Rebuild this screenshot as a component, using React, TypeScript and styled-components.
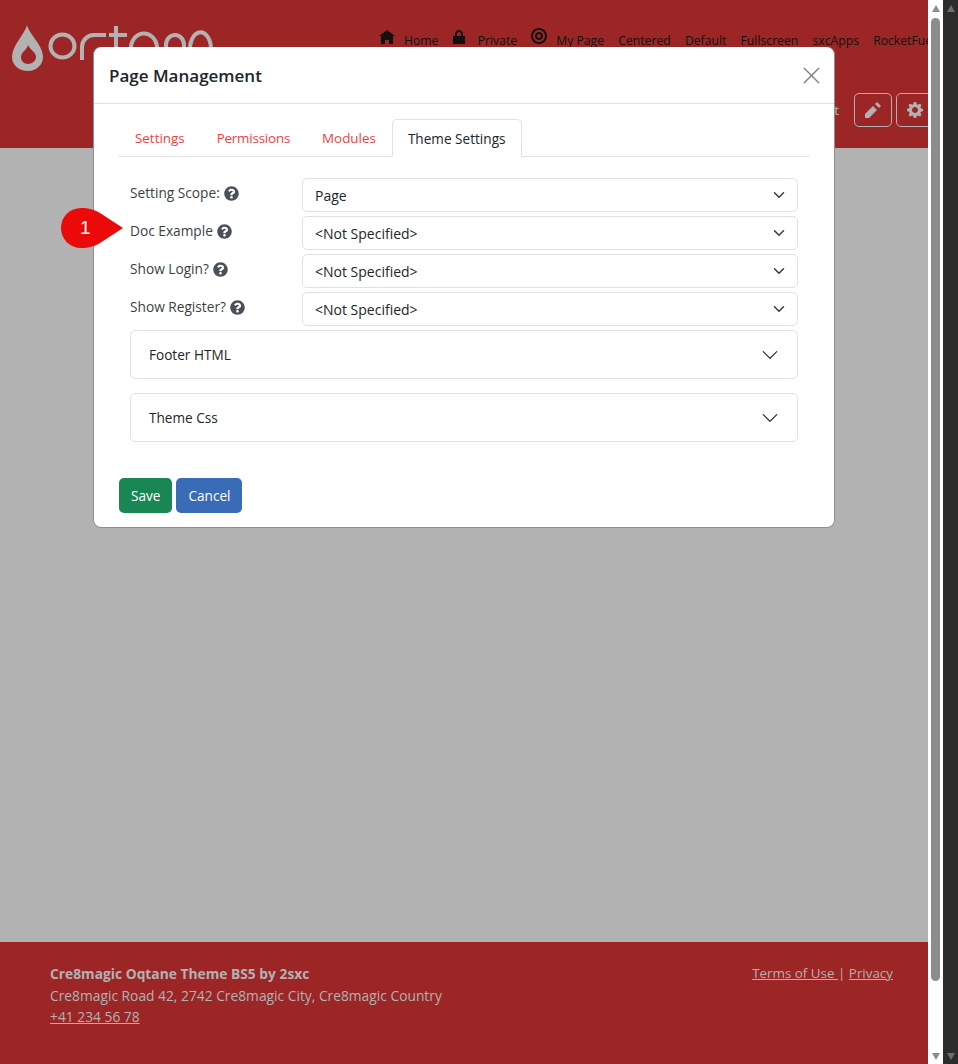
import React from 'react';
import styled, { createGlobalStyle } from 'styled-components';
import { X } from 'lucide-react';
import { FaQuestionCircle } from 'react-icons/fa';

const GlobalStyle = createGlobalStyle`
  html, body {
    margin: 0;
    padding: 0;
    height: 100%;
    overflow: hidden;
  }
  body {
    font-family: "Open Sans", "Noto Sans", sans-serif;
    font-size: 14px;
    color: #212529;
  }
`;

const HOME = 'M4 0l-4 3h1v4h2v-2h2v2h2v-4.03l1 .03-4-3z';
const LOCK = 'M3 0c-1.1 0-2 .9-2 2v1h-1v4h6v-4h-1v-1c0-1.1-.9-2-2-2zm0 1c.55 0 1 .45 1 1v1h-2v-1c0-.55.45-1 1-1z';
const TARGET =
  'M4 0c-2.2 0-4 1.8-4 4s1.8 4 4 4 4-1.8 4-4-1.8-4-4-4zm0 1c1.66 0 3 1.34 3 3s-1.34 3-3 3-3-1.34-3-3 1.34-3 3-3zm0 1c-1.1 0-2 .9-2 2s.9 2 2 2 2-.9 2-2-.9-2-2-2zm0 1c.55 0 1 .45 1 1s-.45 1-1 1-1-.45-1-1 .45-1 1-1z';
const PENCIL = 'M6 0l-1 1 2 2 1-1-2-2zm-2 2l-4 4v2h2l4-4-2-2z';
const COG =
  'M3.5 0l-.5 1.19c-.1.03-.19.08-.28.13l-1.19-.5-.72.72.5 1.19c-.05.1-.09.18-.13.28l-1.19.5v1l1.19.5c.04.1.08.18.13.28l-.5 1.19.72.72 1.19-.5c.09.04.18.09.28.13l.5 1.19h1l.5-1.19c.09-.04.19-.08.28-.13l1.19.5.72-.72-.5-1.19c.04-.09.09-.19.13-.28l1.19-.5v-1l-1.19-.5c-.03-.09-.08-.19-.13-.28l.5-1.19-.72-.72-1.19.5c-.09-.04-.19-.09-.28-.13l-.5-1.19h-1zm.5 2.5c.83 0 1.5.67 1.5 1.5s-.67 1.5-1.5 1.5-1.5-.67-1.5-1.5.67-1.5 1.5-1.5z';
const ACCORDION_CHEVRON =
  'M1.646 4.646a.5.5 0 0 1 .708 0L8 10.293l5.646-5.647a.5.5 0 0 1 .708.708l-6 6a.5.5 0 0 1-.708 0l-6-6a.5.5 0 0 1 0-.708z';

const menu = [
  { label: 'Home', icon: HOME, box: 8, top: 5 },
  { label: 'Private', icon: LOCK, box: 6, top: 5 },
  { label: 'My Page', icon: TARGET, box: 8, top: 3 },
  { label: 'Centered' },
  { label: 'Default' },
  { label: 'Fullscreen' },
  { label: 'sxcApps' },
  { label: 'RocketFuel' },
];

const fields = [
  { label: 'Setting Scope:', value: 'Page' },
  { label: 'Doc Example', value: '<Not Specified>' },
  { label: 'Show Login?', value: '<Not Specified>' },
  { label: 'Show Register?', value: '<Not Specified>' },
];

function Logo() {
  return (
    <LogoSvg width="215" height="55" viewBox="0 25 215 55" fill="none">
      <path
        transform="translate(0 25)"
        d="M27 0 C29 9 43 20 43 32 C43 40 36 46 28 46 C19 46 12 40 12 32 C12 20 25 9 27 0Z M28 20 C27 25 21 27 21 32 C21 36 24 39 28 39 C32 39 36 36 36 32 C36 27 30 25 28 20Z"
        fill="#b2b2b2"
        fillRule="evenodd"
      />
      <g stroke="#b2b2b2" strokeWidth="4">
        <ellipse cx="62.5" cy="46" rx="12" ry="11.5" />
        <path d="M106 35 H94 A12 12 0 0 0 82 47 V60" />
        <path d="M116 26 V60 M109 35 H127" />
        <path d="M131 50 A13 15 0 0 1 157 47 V60" />
        <path d="M166 60 V45 A9 10 0 0 1 184 45 V60" />
        <path d="M190 52 A10.5 17 0 0 1 211 47" />
      </g>
    </LogoSvg>
  );
}

function AccordionChevron() {
  return (
    <AccordionIcon viewBox="0 0 16 16">
      <path d={ACCORDION_CHEVRON} />
    </AccordionIcon>
  );
}

function App() {
  return (
    <Shell>
      <GlobalStyle />
      <Page>
        <Header>
          <Logo />
          <HeaderRight>
            <Menu>
              {menu.map((item) => (
                <MenuItem key={item.label}>
                  {item.icon && (
                    <MenuIcon viewBox={`0 0 ${item.box} 8`} $wide={item.box === 8} $top={item.top}>
                      <path d={item.icon} />
                    </MenuIcon>
                  )}
                  <span>{item.label}</span>
                </MenuItem>
              ))}
            </Menu>
            <Tools>
              <Logout>Logout</Logout>
              <ToolButton>
                <ToolIcon viewBox="0 0 8 8">
                  <path d={PENCIL} />
                </ToolIcon>
              </ToolButton>
              <ToolButton>
                <ToolIcon viewBox="0 0 8 8">
                  <path d={COG} />
                </ToolIcon>
              </ToolButton>
            </Tools>
          </HeaderRight>
        </Header>
        <Main />
        <Footer>
          <Address>
            <strong>Cre8magic Oqtane Theme BS5 by 2sxc</strong>
            <span>Cre8magic Road 42, 2742 Cre8magic City, Cre8magic Country</span>
            <FooterLink>+41 234 56 78</FooterLink>
          </Address>
          <Legal>
            <FooterLink>Terms of Use </FooterLink>|{' '}
            <FooterLink>Privacy</FooterLink>
          </Legal>
        </Footer>

        <Modal>
          <ModalHeader>
            <ModalTitle>Page Management</ModalTitle>
            <CloseButton>
              <X size={29} strokeWidth={1.1} />
            </CloseButton>
          </ModalHeader>
          <ModalBody>
            <Tabs>
              <Tab>Settings</Tab>
              <Tab $tight>Permissions</Tab>
              <Tab>Modules</Tab>
              <Tab $active>Theme Settings</Tab>
            </Tabs>
            <Form>
              {fields.map((field) => (
                <Row key={field.label}>
                  <Label>
                    {field.label}
                    <HelpIcon />
                    {field.label === 'Doc Example' && (
                      <Marker>
                        <svg width="62" height="40" viewBox="0 0 62 40">
                          <path
                            d="M20 0 C28 0 33 1.5 39 5 L62 20 L39 35 C33 38.5 28 40 20 40 A20 20 0 0 1 20 0Z"
                            fill="#ea0a0a"
                          />
                        </svg>
                        <MarkerNumber>1</MarkerNumber>
                      </Marker>
                    )}
                  </Label>
                  <Select>
                    <span>{field.value}</span>
                    <SelectIcon viewBox="0 0 16 16">
                      <path d="M2 5l6 6 6-6" />
                    </SelectIcon>
                  </Select>
                </Row>
              ))}
              <Accordion>
                Footer HTML
                <AccordionChevron />
              </Accordion>
              <Accordion>
                Theme Css
                <AccordionChevron />
              </Accordion>
            </Form>
            <Actions>
              <ActionButton $bg="#198754">Save</ActionButton>
              <ActionButton $bg="#3a6bb7">Cancel</ActionButton>
            </Actions>
          </ModalBody>
        </Modal>
      </Page>
      <Scrollbar $bg="#fff">
        <Arrow $up $color="#8c8c8c" />
        <Thumb />
        <Arrow $color="#8c8c8c" />
      </Scrollbar>
      <Scrollbar $bg="#2c2c2c">
        <Arrow $up $color="#6e6e6e" />
        <Arrow $color="#6e6e6e" />
      </Scrollbar>
    </Shell>
  );
}

const Shell = styled.div`
  display: flex;
  height: 1064px;
  overflow: hidden;
`;

const Page = styled.div`
  position: relative;
  width: 928px;
  flex: none;
  display: flex;
  flex-direction: column;
  background: #b2b2b2;
  overflow: hidden;
`;

const Header = styled.header`
  height: 148px;
  flex: none;
  display: flex;
  background: #9c2626;
  padding-top: 25px;
  box-sizing: border-box;
`;

const LogoSvg = styled.svg`
  flex: none;
`;

const HeaderRight = styled.div`
  flex: 1;
  min-width: 0;
  display: flex;
  flex-direction: column;
`;

const Menu = styled.nav`
  display: flex;
  gap: 14.2px;
  height: 68px;
  margin-left: 164px;
  white-space: nowrap;
  color: #111;
  font-size: 12.2px;
`;

const MenuItem = styled.div`
  display: flex;
  align-items: flex-start;
  gap: 9px;

  & > span {
    margin-top: 8px;
    line-height: 16px;
  }
`;

const MenuIcon = styled.svg<{ $wide: boolean; $top?: number }>`
  width: ${(p) => (p.$wide ? 16 : 12)}px;
  height: 16px;
  margin-top: ${(p) => p.$top}px;
  margin-right: ${(p) => (p.$wide ? 0 : 4)}px;
  fill: #111;
  flex: none;
`;

const Tools = styled.div`
  display: flex;
  align-items: center;
  align-self: flex-end;
  gap: 4px;
  margin-right: -6px;
`;

const Logout = styled.span`
  margin-right: 11px;
  font-size: 13.4px;
  color: #b2b2b2;
`;

const ToolButton = styled.div`
  width: 38px;
  height: 34px;
  box-sizing: border-box;
  border: 1px solid #b2b2b2;
  border-radius: 5px;
  display: flex;
  align-items: center;
  justify-content: center;
`;

const ToolIcon = styled.svg`
  width: 16px;
  height: 16px;
  fill: #b2b2b2;
`;

const Main = styled.main`
  flex: 1;
`;

const Footer = styled.footer`
  height: 122px;
  flex: none;
  box-sizing: border-box;
  display: flex;
  justify-content: space-between;
  padding: 21px 35px 0 50px;
  background: #9c2626;
  color: #b2b2b2;
  font-size: 13.8px;
  line-height: 21.7px;
`;

const Address = styled.div`
  display: flex;
  flex-direction: column;
  align-items: flex-start;
`;

const Legal = styled.div`
  white-space: pre;
  font-size: 13.4px;
`;

const FooterLink = styled.span`
  text-decoration: underline;
`;

const Modal = styled.div`
  position: absolute;
  left: 93px;
  top: 47px;
  width: 742px;
  height: 481px;
  box-sizing: border-box;
  background: #fff;
  border: 1px solid #8f8f8f;
  border-top: none;
  border-radius: 8px;
`;

const ModalHeader = styled.div`
  height: 57px;
  box-sizing: border-box;
  display: flex;
  align-items: center;
  justify-content: space-between;
  padding: 0 8px 0 15px;
  border-bottom: 1px solid #dee2e6;
`;

const ModalTitle = styled.h5`
  margin: 1px 0 0;
  font-size: 17px;
  font-weight: 600;
  color: #212529;
`;

const CloseButton = styled.div`
  display: flex;
  color: #7f7f7f;
`;

const ModalBody = styled.div`
  padding: 15px 25px 0;
`;

const Tabs = styled.div`
  display: flex;
  height: 37px;
  border-bottom: 1px solid #dee2e6;
`;

const Tab = styled.div<{ $active?: boolean; $tight?: boolean }>`
  box-sizing: border-box;
  height: 38px;
  padding: 0 15px;
  display: flex;
  align-items: center;
  font-size: ${(p) => (p.$active ? '13.6px' : '13.4px')};
  letter-spacing: ${(p) => (p.$tight ? '-0.2px' : '0')};
  color: ${(p) => (p.$active ? '#212529' : '#ee3f3f')};
  background: ${(p) => (p.$active ? '#fff' : 'transparent')};
  border: 1px solid ${(p) => (p.$active ? '#dee2e6' : 'transparent')};
  border-bottom-color: ${(p) => (p.$active ? '#fff' : 'transparent')};
  border-radius: 5px 5px 0 0;
`;

const Form = styled.div`
  display: flex;
  flex-direction: column;
  gap: 4px;
  padding: 21px 11px 0;
`;

const Row = styled.div`
  display: flex;
  align-items: flex-start;
`;

const Label = styled.label`
  position: relative;
  width: 172px;
  flex: none;
  display: flex;
  align-items: center;
  gap: 4px;
  height: 28px;
  font-size: 13.7px;
  color: #3b3f44;
`;

const HelpIcon = styled(FaQuestionCircle)`
  width: 15px;
  height: 15px;
  margin-top: 2px;
  color: #495057;
`;

const Marker = styled.div`
  position: absolute;
  left: -69px;
  top: -8px;
  width: 62px;
  height: 40px;
`;

const MarkerNumber = styled.span`
  position: absolute;
  left: 19px;
  top: 9px;
  color: #fff;
  font-family: "Liberation Sans", sans-serif;
  font-size: 19px;
  line-height: 22px;
`;

const Select = styled.div`
  flex: 1;
  height: 34px;
  box-sizing: border-box;
  display: flex;
  align-items: center;
  justify-content: space-between;
  padding: 0 12px;
  border: 1px solid #dee2e6;
  border-radius: 5px;
  font-size: 14px;
  color: #212529;
`;

const SelectIcon = styled.svg`
  width: 12px;
  height: 12px;
  fill: none;
  stroke: #343a40;
  stroke-width: 2;
  stroke-linecap: round;
  stroke-linejoin: round;
`;

const Accordion = styled.div`
  height: 49px;
  box-sizing: border-box;
  display: flex;
  align-items: center;
  justify-content: space-between;
  padding: 0 18px;
  border: 1px solid #dee2e6;
  border-radius: 5px;
  font-size: 13.6px;
  color: #212529;

  & + & {
    margin-top: 10px;
  }
`;

const AccordionIcon = styled.svg`
  width: 18px;
  height: 18px;
  fill: #212529;
`;

const Actions = styled.div`
  display: flex;
  gap: 4px;
  margin-top: 36px;
`;

const ActionButton = styled.div<{ $bg: string }>`
  height: 35px;
  padding: 0 12px;
  display: flex;
  align-items: center;
  border-radius: 5px;
  background: ${(p) => p.$bg};
  color: #fff;
  font-size: 13.6px;
`;

const Scrollbar = styled.div<{ $bg: string }>`
  width: 15px;
  flex: none;
  display: flex;
  flex-direction: column;
  align-items: center;
  justify-content: space-between;
  background: ${(p) => p.$bg};
  padding: 5px 0 4px;
  box-sizing: border-box;
`;

const Thumb = styled.div`
  flex: 1;
  width: 9px;
  margin: 6px 0 72px;
  border-radius: 5px;
  background: #8c8c8c;
`;

const Arrow = styled.div<{ $up?: boolean; $color: string }>`
  width: 0;
  height: 0;
  border-left: 4.5px solid transparent;
  border-right: 4.5px solid transparent;
  border-${(p) => (p.$up ? 'bottom' : 'top')}: 7px solid ${(p) => p.$color};
`;

export default App;
